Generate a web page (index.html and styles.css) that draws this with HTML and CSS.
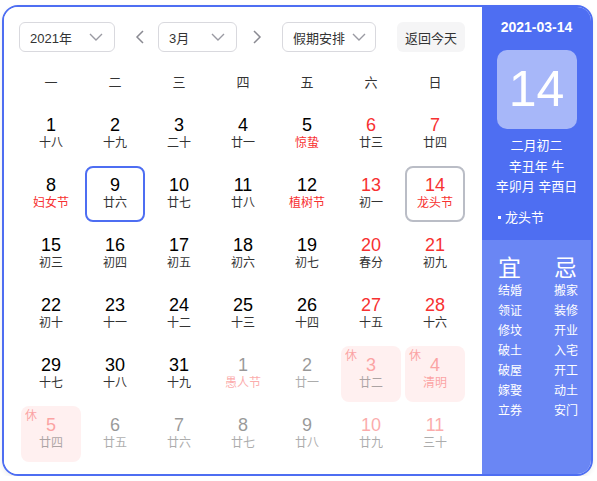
FILE: index.html
```html
<!DOCTYPE html>
<html lang="zh">
<head>
<meta charset="utf-8">
<title>万年历</title>
<link rel="stylesheet" href="styles.css">
</head>
<body>
<div class="cal">
  <div class="main">
    <div class="toolbar">
      <div class="select sel-year"><span>2021年</span><svg class="chev" width="14" height="8" viewBox="0 0 14 8"><path d="M1 1 L7 7 L13 1" fill="none" stroke="#9a9aa2" stroke-width="1.4"/></svg></div>
      <div class="arrow arrow-prev"><svg width="9" height="14" viewBox="0 0 9 14"><path d="M8 1 L2 7 L8 13" fill="none" stroke="#8a8a92" stroke-width="1.5"/></svg></div>
      <div class="select sel-month"><span>3月</span><svg class="chev" width="14" height="8" viewBox="0 0 14 8"><path d="M1 1 L7 7 L13 1" fill="none" stroke="#9a9aa2" stroke-width="1.4"/></svg></div>
      <div class="arrow arrow-next"><svg width="9" height="14" viewBox="0 0 9 14"><path d="M1 1 L7 7 L1 13" fill="none" stroke="#8a8a92" stroke-width="1.5"/></svg></div>
      <div class="select sel-holiday"><span>假期安排</span><svg class="chev" width="14" height="8" viewBox="0 0 14 8"><path d="M1 1 L7 7 L13 1" fill="none" stroke="#9a9aa2" stroke-width="1.4"/></svg></div>
      <div class="btn-today">返回今天</div>
    </div>
    <div class="weekdays">
      <span>一</span><span>二</span><span>三</span><span>四</span><span>五</span><span>六</span><span>日</span>
    </div>
    <div class="grid">
      <div class="day"><span class="num">1</span><span class="lunar">十八</span></div>
      <div class="day"><span class="num">2</span><span class="lunar">十九</span></div>
      <div class="day"><span class="num">3</span><span class="lunar">二十</span></div>
      <div class="day"><span class="num">4</span><span class="lunar">廿一</span></div>
      <div class="day"><span class="num">5</span><span class="lunar fest">惊蛰</span></div>
      <div class="day weekend"><span class="num">6</span><span class="lunar">廿三</span></div>
      <div class="day weekend"><span class="num">7</span><span class="lunar">廿四</span></div>

      <div class="day"><span class="num">8</span><span class="lunar fest">妇女节</span></div>
      <div class="day selected"><span class="num">9</span><span class="lunar">廿六</span></div>
      <div class="day"><span class="num">10</span><span class="lunar">廿七</span></div>
      <div class="day"><span class="num">11</span><span class="lunar">廿八</span></div>
      <div class="day"><span class="num">12</span><span class="lunar fest">植树节</span></div>
      <div class="day weekend"><span class="num">13</span><span class="lunar">初一</span></div>
      <div class="day weekend today"><span class="num">14</span><span class="lunar fest">龙头节</span></div>

      <div class="day"><span class="num">15</span><span class="lunar">初三</span></div>
      <div class="day"><span class="num">16</span><span class="lunar">初四</span></div>
      <div class="day"><span class="num">17</span><span class="lunar">初五</span></div>
      <div class="day"><span class="num">18</span><span class="lunar">初六</span></div>
      <div class="day"><span class="num">19</span><span class="lunar">初七</span></div>
      <div class="day weekend"><span class="num">20</span><span class="lunar">春分</span></div>
      <div class="day weekend"><span class="num">21</span><span class="lunar">初九</span></div>

      <div class="day"><span class="num">22</span><span class="lunar">初十</span></div>
      <div class="day"><span class="num">23</span><span class="lunar">十一</span></div>
      <div class="day"><span class="num">24</span><span class="lunar">十二</span></div>
      <div class="day"><span class="num">25</span><span class="lunar">十三</span></div>
      <div class="day"><span class="num">26</span><span class="lunar">十四</span></div>
      <div class="day weekend"><span class="num">27</span><span class="lunar">十五</span></div>
      <div class="day weekend"><span class="num">28</span><span class="lunar">十六</span></div>

      <div class="day"><span class="num">29</span><span class="lunar">十七</span></div>
      <div class="day"><span class="num">30</span><span class="lunar">十八</span></div>
      <div class="day"><span class="num">31</span><span class="lunar">十九</span></div>
      <div class="day other"><span class="num">1</span><span class="lunar fest">愚人节</span></div>
      <div class="day other"><span class="num">2</span><span class="lunar">廿一</span></div>
      <div class="day other weekend rest"><span class="rest-tag">休</span><span class="num">3</span><span class="lunar">廿二</span></div>
      <div class="day other weekend rest"><span class="rest-tag">休</span><span class="num">4</span><span class="lunar fest">清明</span></div>

      <div class="day other weekend rest"><span class="rest-tag">休</span><span class="num">5</span><span class="lunar">廿四</span></div>
      <div class="day other"><span class="num">6</span><span class="lunar">廿五</span></div>
      <div class="day other"><span class="num">7</span><span class="lunar">廿六</span></div>
      <div class="day other"><span class="num">8</span><span class="lunar">廿七</span></div>
      <div class="day other"><span class="num">9</span><span class="lunar">廿八</span></div>
      <div class="day other weekend"><span class="num">10</span><span class="lunar">廿九</span></div>
      <div class="day other weekend"><span class="num">11</span><span class="lunar">三十</span></div>
    </div>
  </div>
  <div class="side">
    <div class="side-top">
      <div class="side-date">2021-03-14</div>
      <div class="big-day">14</div>
      <div class="lunar-info">
        <div>二月初二</div>
        <div>辛丑年 牛</div>
        <div>辛卯月 辛酉日</div>
      </div>
      <div class="side-fest"><span class="dot"></span>龙头节</div>
    </div>
    <div class="side-bottom">
      <div class="yj">
        <div class="yj-head">宜</div>
        <div>结婚</div><div>领证</div><div>修坟</div><div>破土</div><div>破屋</div><div>嫁娶</div><div>立券</div>
      </div>
      <div class="yj">
        <div class="yj-head">忌</div>
        <div>搬家</div><div>装修</div><div>开业</div><div>入宅</div><div>开工</div><div>动土</div><div>安门</div>
      </div>
    </div>
  </div>
</div>
</body>
</html>
```

FILE: styles.css
```css
* { box-sizing: border-box; }

body {
  margin: 0;
  background: #fff;
  font-family: "Liberation Sans", "Noto Sans CJK SC", sans-serif;
  color: #333;
}

.cal {
  margin: 5px 0 0 2px;
  width: 591px;
  height: 471px;
  border: 2px solid #4e6ef2;
  border-radius: 16px;
  display: flex;
  overflow: hidden;
  box-shadow: 0 2px 5px rgba(0, 0, 0, 0.08);
}

.main {
  width: 478px;
  padding: 15px 0 0 15px;
  background: #fff;
}

.toolbar {
  display: flex;
  align-items: center;
  height: 30px;
}

.select {
  height: 30px;
  border: 1px solid #d9d9de;
  border-radius: 6px;
  display: flex;
  align-items: center;
  justify-content: space-between;
  padding: 0 11px 0 10px;
  font-size: 13px;
  color: #333;
}

.chev { display: block; }

.sel-year { width: 96px; }
.sel-month { width: 79px; }
.sel-holiday { width: 94px; padding-left: 10px; padding-right: 9px; }

.arrow {
  width: 14px;
  height: 30px;
  display: flex;
  align-items: center;
  justify-content: center;
}
.arrow svg { display: block; }
.arrow-prev { margin: 0 12px 0 17px; }
.arrow-next { margin: 0 18px 0 13px; }

.btn-today {
  margin-left: 21px;
  width: 68px;
  height: 30px;
  border-radius: 6px;
  background: #f5f5f6;
  font-size: 13px;
  color: #333;
  display: flex;
  align-items: center;
  justify-content: center;
}

.weekdays {
  margin: 21px 0 0 2px;
  display: grid;
  grid-template-columns: repeat(7, 60px);
  column-gap: 4px;
  height: 20px;
  line-height: 20px;
  font-size: 13px;
  color: #333;
  text-align: center;
}

.grid {
  margin: 13px 0 0 2px;
  display: grid;
  grid-template-columns: repeat(7, 60px);
  grid-auto-rows: 56px;
  gap: 4px;
}

.day {
  position: relative;
  display: flex;
  flex-direction: column;
  align-items: center;
  padding-top: 8px;
  border-radius: 8px;
  border: 2px solid transparent;
}

.num {
  font-size: 18px;
  line-height: 22px;
  color: #000;
  margin-top: -2px;
}

.lunar {
  font-size: 12px;
  line-height: 14px;
  color: #333;
}

.weekend .num { color: #f73131; }
.lunar.fest { color: #f73131; }

.selected { border-color: #4e6ef2; }
.today { border-color: #babdc6; }

.other .num,
.other .lunar,
.other .rest-tag { opacity: 0.4; }

.rest { background: #fff0f0; }

.rest-tag {
  position: absolute;
  left: 2px;
  top: 0px;
  font-size: 12px;
  line-height: 16px;
  color: #f73131;
}

.side {
  width: 109px;
  display: flex;
  flex-direction: column;
  color: #fff;
}

.side-top {
  height: 233px;
  background: #4e6ef2;
  display: flex;
  flex-direction: column;
  align-items: center;
  padding-top: 12px;
}

.side-date {
  font-size: 14px;
  line-height: 16px;
  font-weight: bold;
}

.big-day {
  margin-top: 15px;
  width: 80px;
  height: 79px;
  border-radius: 10px;
  background: rgba(255, 255, 255, 0.5);
  font-size: 50px;
  line-height: 79px;
  text-align: center;
}

.lunar-info {
  margin-top: 7px;
  font-size: 13px;
  line-height: 20.5px;
  text-align: center;
}

.side-fest {
  align-self: flex-start;
  margin: 12px 0 0 16px;
  font-size: 13px;
  line-height: 16px;
  display: flex;
  align-items: center;
}

.dot {
  width: 3px;
  height: 3px;
  background: #fff;
  margin-right: 4px;
}

.side-bottom {
  flex: 1;
  background: #6a86f4;
  display: flex;
  padding: 15px 0 0 16px;
  gap: 32px;
}

.yj {
  width: 24px;
  font-size: 12px;
  line-height: 20px;
}

.yj-head {
  font-size: 23px;
  line-height: 26px;
  margin-bottom: 0px;
}
```
